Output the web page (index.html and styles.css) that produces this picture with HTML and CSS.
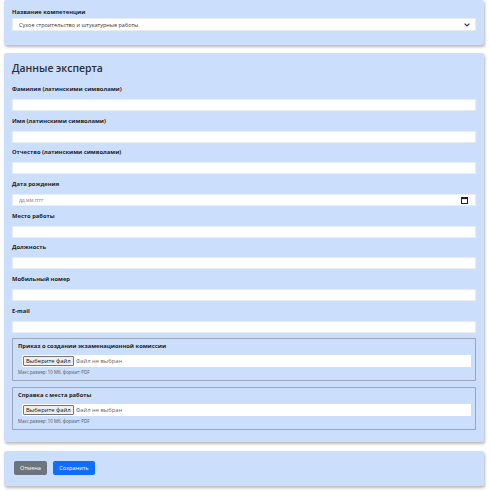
FILE: index.html
```html
<!DOCTYPE html>
<html lang="ru">
<head>
    <meta charset="UTF-8">
    <meta name="viewport" content="width=device-width, initial-scale=1.0">
    <title>Данные эксперта</title>
    <link rel="stylesheet" href="styles.css">
</head>
<body>
    <div class="page">
        <section class="card card-top">
            <label class="field-label" for="competence">Название компетенции</label>
            <div class="select" id="competence">
                <span>Сухое строительство и штукатурные работы</span>
                <svg class="chevron" width="6" height="4" viewBox="0 0 6 4">
                    <path d="M0.6 0.6 L3 3 L5.4 0.6" fill="none" stroke="#333" stroke-width="1.1"/>
                </svg>
            </div>
        </section>

        <section class="card card-main">
            <h2 class="card-title">Данные эксперта</h2>

            <div class="form-group">
                <label class="field-label" for="lastName">Фамилия (латинскими символами)</label>
                <input class="field-input" type="text" id="lastName">
            </div>
            <div class="form-group">
                <label class="field-label" for="firstName">Имя (латинскими символами)</label>
                <input class="field-input" type="text" id="firstName">
            </div>
            <div class="form-group">
                <label class="field-label" for="middleName">Отчество (латинскими символами)</label>
                <input class="field-input" type="text" id="middleName">
            </div>
            <div class="form-group">
                <label class="field-label" for="birthDate">Дата рождения</label>
                <div class="field-input date-input" id="birthDate">
                    <span class="placeholder">дд.мм.гггг</span>
                    <svg class="calendar" width="7" height="7" viewBox="0 0 7 7">
                        <rect x="0.5" y="0.5" width="6" height="6" fill="none" stroke="#222" stroke-width="1"/>
                        <rect x="0.5" y="0.5" width="6" height="1.6" fill="#222"/>
                    </svg>
                </div>
            </div>
            <div class="form-group">
                <label class="field-label" for="workplace">Место работы</label>
                <input class="field-input" type="text" id="workplace">
            </div>
            <div class="form-group">
                <label class="field-label" for="position">Должность</label>
                <input class="field-input" type="text" id="position">
            </div>
            <div class="form-group">
                <label class="field-label" for="phone">Мобильный номер</label>
                <input class="field-input" type="text" id="phone">
            </div>
            <div class="form-group">
                <label class="field-label" for="email">E-mail</label>
                <input class="field-input" type="text" id="email">
            </div>

            <div class="file-box">
                <div class="file-title">Приказ о создании экзаменационной комиссии</div>
                <div class="file-input">
                    <button type="button" class="file-btn">Выберите файл</button>
                    <span class="file-name">Файл не выбран</span>
                </div>
                <div class="file-note">Макс.размер: 10 Мб, формат: PDF</div>
            </div>

            <div class="file-box">
                <div class="file-title">Справка с места работы</div>
                <div class="file-input">
                    <button type="button" class="file-btn">Выберите файл</button>
                    <span class="file-name">Файл не выбран</span>
                </div>
                <div class="file-note">Макс.размер: 10 Мб, формат: PDF</div>
            </div>
        </section>

        <section class="card card-actions">
            <button type="button" class="btn btn-secondary">Отмена</button>
            <button type="button" class="btn btn-primary">Сохранить</button>
        </section>
    </div>
</body>
</html>
```

FILE: styles.css
```css
* {
    margin: 0;
    padding: 0;
    box-sizing: border-box;
}

body {
    font-family: 'Open Sans', 'Noto Sans', sans-serif;
    background: #fff;
    color: #212529;
}

.page {
    padding: 0 6px 0 4px;
}

.card {
    background: #cbdffc;
    box-shadow: 1px 2px 3px rgba(0, 0, 0, 0.28);
    border-radius: 2px;
    margin-bottom: 8px;
}

.card-top {
    padding: 7px 8px 14px;
}

.card-main {
    padding: 8px 8px 12px;
    margin-bottom: 9px;
}

.card-actions {
    display: flex;
    gap: 6px;
    padding: 10px 10px 11px;
}

.card-title {
    font-size: 10.4px;
    font-weight: 600;
    line-height: 15px;
    color: #2b2f33;
    margin-bottom: 8px;
}

.field-label {
    display: block;
    font-size: 5.8px;
    font-weight: 700;
    line-height: 10px;
    color: #222;
    margin-bottom: 5px;
}

.card-top .field-label {
    margin-bottom: 1px;
}

.form-group {
    margin-bottom: 4.7px;
}

.field-input {
    display: block;
    width: 100%;
    height: 12px;
    background: #fff;
    border: 1px solid #e8edf3;
    border-radius: 1px;
    font-family: inherit;
    font-size: 6px;
}

.select {
    display: flex;
    align-items: center;
    justify-content: space-between;
    height: 13px;
    background: #fff;
    border: 1px solid #e8edf3;
    border-radius: 1px;
    padding: 0 5px 0 6px;
    font-size: 5.5px;
    color: #333;
}

.date-input {
    display: flex;
    align-items: center;
    justify-content: space-between;
    padding: 0 7px 0 6px;
}

.placeholder {
    font-size: 5px;
    color: #777;
}

.file-box {
    border: 1px solid #9ba6b6;
    padding: 2px 4px 4px 5px;
    margin-top: 3px;
    margin-bottom: 6px;
}

.file-box:last-child {
    margin-bottom: 0;
}

.file-title {
    font-size: 5.8px;
    font-weight: 700;
    line-height: 10px;
    color: #222;
    margin-bottom: 4px;
}

.file-input {
    display: flex;
    align-items: center;
    gap: 2px;
    height: 12px;
    margin-left: 4px;
    background: #fff;
    padding-left: 1px;
}

.file-btn {
    font-family: inherit;
    font-size: 5.9px;
    line-height: 8px;
    padding: 0 2px;
    background: #efefef;
    border: 1px solid #767676;
    border-radius: 1px;
    color: #111;
}

.file-name {
    font-size: 5.8px;
    color: #666;
}

.file-note {
    font-size: 4.4px;
    line-height: 7px;
    color: #555;
    margin-top: 2px;
}

.btn {
    height: 14px;
    border: none;
    border-radius: 2px;
    font-family: inherit;
    font-size: 5.6px;
    color: #fff;
}

.btn-secondary {
    width: 33px;
    background: #6c757d;
}

.btn-primary {
    width: 42px;
    background: #0d6efd;
}
```
